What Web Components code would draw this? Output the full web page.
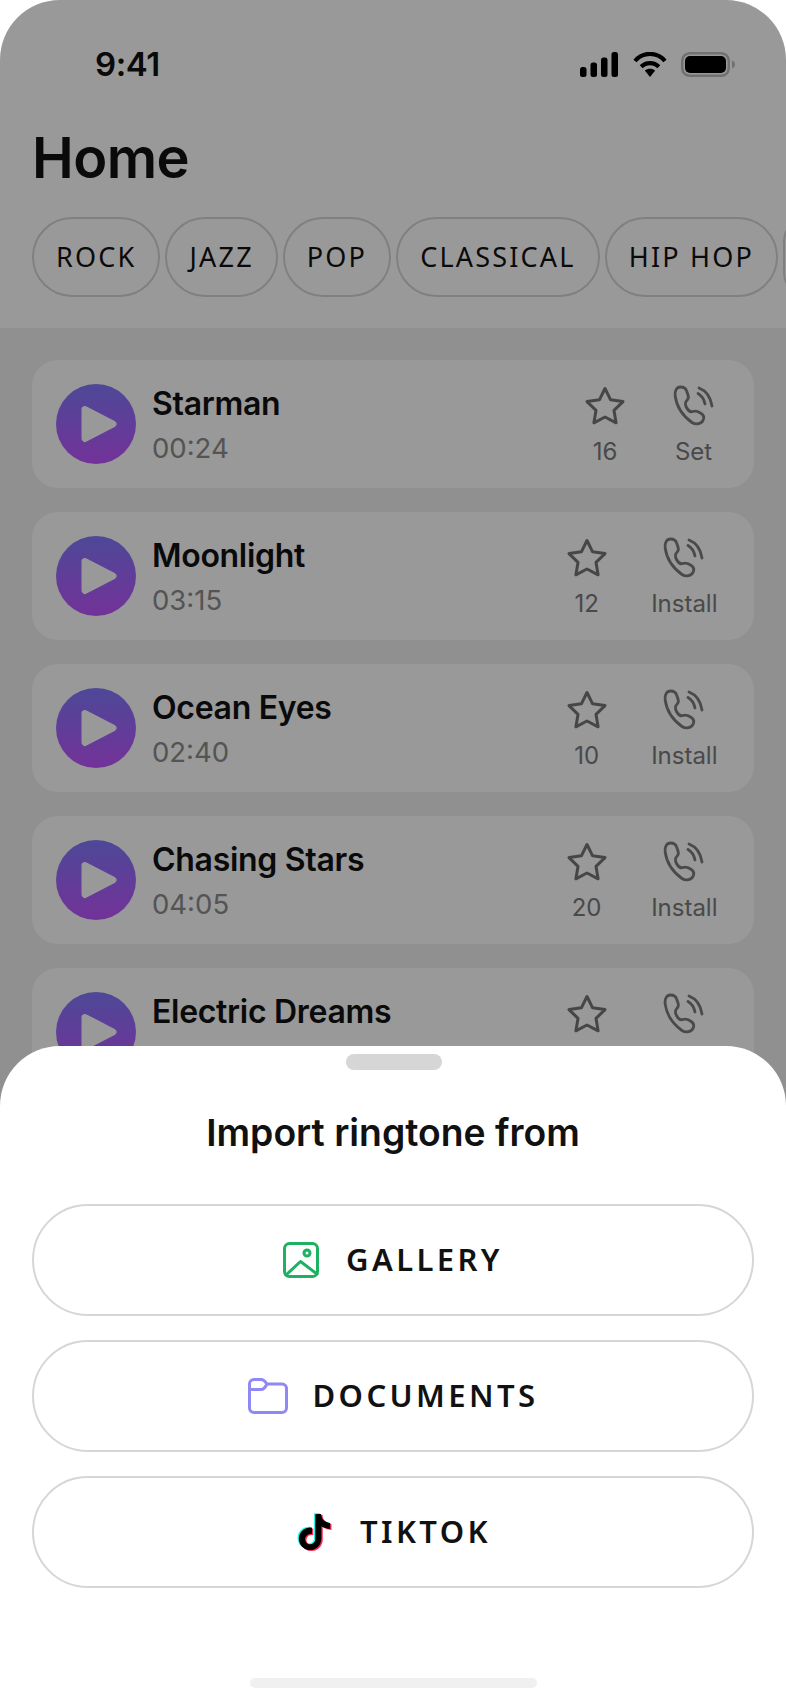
<!DOCTYPE html>
<html lang="en">
<head>
<meta charset="utf-8">
<title>Home</title>
<style>
  html, body { margin: 0; padding: 0; background: #fff; }
  body { font-family: Inter, "Liberation Sans", sans-serif; color: #111; }
</style>
</head>
<body>
<app-screen>
  <status-bar slot="header" time="9:41"></status-bar>
  <home-header slot="header" heading="Home">
    <genre-chip>ROCK</genre-chip>
    <genre-chip>JAZZ</genre-chip>
    <genre-chip>POP</genre-chip>
    <genre-chip>CLASSICAL</genre-chip>
    <genre-chip>HIP HOP</genre-chip>
    <genre-chip></genre-chip>
  </home-header>

  <ringtone-card name="Starman" time="00:24" stars="16" action="Set"></ringtone-card>
  <ringtone-card name="Moonlight" time="03:15" stars="12" action="Install"></ringtone-card>
  <ringtone-card name="Ocean Eyes" time="02:40" stars="10" action="Install"></ringtone-card>
  <ringtone-card name="Chasing Stars" time="04:05" stars="20" action="Install"></ringtone-card>
  <ringtone-card name="Electric Dreams" time="03:50" stars="8" action="Install"></ringtone-card>

  <import-sheet slot="sheet" heading="Import ringtone from">
    <import-option icon="gallery">GALLERY</import-option>
    <import-option icon="documents">DOCUMENTS</import-option>
    <import-option icon="tiktok">TIKTOK</import-option>
  </import-sheet>
</app-screen>

<script>
// Screen frame: header, scrolling list, dim layer and the bottom sheet on top
class AppScreen extends HTMLElement {
  connectedCallback() {
    this.attachShadow({ mode: 'open' }).innerHTML = `
      <style>
        :host {
          display: block;
          position: relative;
          width: 786px;
          height: 1704px;
          overflow: hidden;
          border-radius: 60px 60px 0 0;
          background: #f0f0f0;
        }
        .list {
          display: flex;
          flex-direction: column;
          gap: 24px;
          padding: 32px;
        }
        .scrim {
          position: absolute;
          inset: 0;
          background: rgba(0, 0, 0, 0.4);
        }
      </style>
      <slot name="header"></slot>
      <div class="list"><slot></slot></div>
      <div class="scrim"></div>
      <slot name="sheet"></slot>
    `;
  }
}

class StatusBar extends HTMLElement {
  connectedCallback() {
    const time = this.getAttribute('time') || '';
    this.attachShadow({ mode: 'open' }).innerHTML = `
      <style>
        :host {
          display: flex;
          align-items: center;
          justify-content: space-between;
          height: 48px;
          padding: 40px 50px 36px 95px;
          background: #fff;
        }
        .time { font: 600 33px/48px Inter, sans-serif; color: #111; letter-spacing: -0.4px; }
        .icons { display: flex; align-items: center; }
        svg { display: block; }
      </style>
      <span class="time">${time}</span>
      <div class="icons">
        <svg width="38" height="25" viewBox="0 0 38 25" fill="#000">
          <rect x="0" y="15" width="6.5" height="10" rx="2.5"/>
          <rect x="10.5" y="10.5" width="6.5" height="14.5" rx="2.5"/>
          <rect x="21" y="5.5" width="6.5" height="19.5" rx="2.5"/>
          <rect x="31.5" y="0" width="6.5" height="25" rx="2.5"/>
        </svg>
        <svg style="margin-left:15px" width="34" height="25" viewBox="0 0 34 25">
          <path d="M2 9C10 -0.5 24 -0.5 32 9" fill="none" stroke="#000" stroke-width="4.2"/>
          <path d="M8.2 14.8C13 9.8 21 9.8 25.8 14.8" fill="none" stroke="#000" stroke-width="4.2"/>
          <path d="M11.8 18.6C14.8 16.2 19.2 16.2 22.2 18.6L17 25Z" fill="#000"/>
        </svg>
        <svg style="margin-left:14px" width="55" height="25" viewBox="0 0 55 25">
          <rect x="1.25" y="1.25" width="46.5" height="22.5" rx="7.5" fill="none" stroke="#bcbcbc" stroke-width="2.5"/>
          <rect x="4" y="4" width="41" height="17" rx="5" fill="#000"/>
          <path d="M51 8.5C53 9.2 54 10.6 54 12.5C54 14.4 53 15.8 51 16.5Z" fill="#bcbcbc"/>
        </svg>
      </div>
    `;
  }
}

class HomeHeader extends HTMLElement {
  connectedCallback() {
    const heading = this.getAttribute('heading') || '';
    this.attachShadow({ mode: 'open' }).innerHTML = `
      <style>
        :host {
          display: block;
          box-sizing: border-box;
          background: #fff;
          padding-left: 32px;
          height: 204px;
          overflow: hidden;
        }
        h1 {
          margin: 1px 0 26px 0;
          font: 600 56px/66px Inter, sans-serif;
          color: #111;
          letter-spacing: -0.6px;
        }
        .chips { display: flex; gap: 5px; width: 900px; }
      </style>
      <h1>${heading}</h1>
      <div class="chips"><slot></slot></div>
    `;
  }
}

class GenreChip extends HTMLElement {
  connectedCallback() {
    this.attachShadow({ mode: 'open' }).innerHTML = `
      <style>
        :host {
          display: block;
          flex: none;
          box-sizing: border-box;
          height: 80px;
          padding: 0 22px;
          border: 2px solid #d6d6d6;
          border-radius: 40px;
          font: 400 27px/76px "Noto Sans", sans-serif;
          letter-spacing: 2.2px;
          color: #111;
          white-space: nowrap;
        }
      </style>
      <slot></slot>
    `;
  }
}

class RingtoneCard extends HTMLElement {
  connectedCallback() {
    const name = this.getAttribute('name') || '';
    const time = this.getAttribute('time') || '';
    const stars = this.getAttribute('stars') || '';
    const action = this.getAttribute('action') || '';
    this.attachShadow({ mode: 'open' }).innerHTML = `
      <style>
        :host {
          display: flex;
          flex: none;
          align-items: center;
          height: 128px;
          padding: 0 36.5px 0 24px;
          background: #fff;
          border-radius: 26px;
        }
        .play {
          flex: none;
          display: flex;
          align-items: center;
          justify-content: center;
          width: 80px;
          height: 80px;
          border-radius: 50%;
          background: linear-gradient(180deg, #8179fc 0%, #c054ff 100%);
        }
        .info { flex: 1; min-width: 0; margin-left: 16px; padding-top: 3px; }
        .name { font: 600 32px/44px Inter, sans-serif; color: #111; letter-spacing: -0.3px; }
        .time { font: 400 27.5px/44px Inter, sans-serif; color: #8c8c8c; }
        .actions { display: flex; gap: 40.5px; }
        .action {
          display: flex;
          flex-direction: column;
          align-items: center;
          gap: 7px;
          font: 400 24px/30px Inter, sans-serif;
          color: #7a7a7a;
        }
        svg { display: block; }
      </style>
      <div class="play">
        <svg width="36" height="38" viewBox="0 0 36 38" style="margin-left:6px">
          <path d="M4 4.5L32 19L4 33.5Z" fill="#fff" stroke="#fff" stroke-width="7" stroke-linejoin="round"/>
        </svg>
      </div>
      <div class="info">
        <div class="name">${name}</div>
        <div class="time">${time}</div>
      </div>
      <div class="actions">
        <div class="action">
          <svg width="48" height="48" viewBox="0 0 48 48" fill="none" stroke="#767676" stroke-width="3" stroke-linejoin="round">
            <path d="M24 6.5L29.6 17.8L42 19.6L33 28.4L35.1 40.8L24 35L12.9 40.8L15 28.4L6 19.6L18.4 17.8Z"/>
          </svg>
          <span>${stars}</span>
        </div>
        <div class="action">
          <svg width="48" height="48" viewBox="0 0 48 48" fill="none" stroke="#7c7c7c" stroke-width="2.8" stroke-linecap="round" stroke-linejoin="round">
            <path d="M10.5 5C6.5 5 4.5 9 5.2 14C6.5 24 13 34 22 40.5C26 43 31.5 42 33.2 38C34.5 35 33 32.5 30.5 31L27.5 29.5C25.5 28.8 24.5 29 23 29.5C20 30.5 18 28.5 16.5 25.5C15 22.5 15.2 20 16.8 18.5C18.5 17 18.8 15.5 18 13L16.8 9.5C16 6.5 13.5 5 10.5 5Z"/>
            <path d="M28 11.5C31.5 13.5 34 17 35 22"/>
            <path d="M29 6C35.5 8.5 40.5 14.5 42 24"/>
          </svg>
          <span>${action}</span>
        </div>
      </div>
    `;
  }
}

class ImportSheet extends HTMLElement {
  connectedCallback() {
    const heading = this.getAttribute('heading') || '';
    this.attachShadow({ mode: 'open' }).innerHTML = `
      <style>
        :host {
          position: absolute;
          left: 0;
          right: 0;
          bottom: 0;
          height: 658px;
          display: flex;
          flex-direction: column;
          align-items: center;
          box-sizing: border-box;
          padding: 8px 32px 16px;
          background: #fff;
          border-radius: 60px 60px 0 0;
        }
        .handle { flex: none; width: 96px; height: 16px; margin-left: 2px; border-radius: 8px; background: #d6d6d6; }
        h2 {
          margin: 39px 0 47px;
          font: 600 37.3px/48px Inter, sans-serif;
          color: #111;
        }
        .options { align-self: stretch; display: flex; flex-direction: column; gap: 24px; }
        .home-bar { margin-top: auto; width: 287px; height: 10px; border-radius: 5px; background: #f0f0f0; }
      </style>
      <div class="handle"></div>
      <h2>${heading}</h2>
      <div class="options"><slot></slot></div>
      <div class="home-bar"></div>
    `;
  }
}

const TIKTOK_NOTE = 'M12.525.02c1.31-.02 2.61-.01 3.91-.02.08 1.53.63 3.09 1.75 4.17 1.12 1.11 2.7 1.62 4.24 1.79v4.03c-1.44-.05-2.89-.35-4.2-.97-.57-.26-1.1-.59-1.62-.93-.01 2.92.01 5.84-.02 8.75-.08 1.4-.54 2.79-1.35 3.94-1.31 1.92-3.58 3.17-5.91 3.21-1.43.08-2.86-.31-4.08-1.03-2.02-1.19-3.44-3.37-3.65-5.71-.02-.5-.03-1-.01-1.49.18-1.9 1.12-3.72 2.58-4.96 1.66-1.44 3.98-2.13 6.15-1.72.02 1.48-.04 2.96-.04 4.44-.99-.32-2.15-.23-3.02.37-.63.41-1.11 1.04-1.36 1.75-.21.51-.15 1.07-.14 1.61.24 1.64 1.82 3.02 3.5 2.87 1.12-.01 2.19-.66 2.77-1.61.19-.33.4-.67.41-1.06.1-1.79.06-3.57.07-5.36.01-4.03-.01-8.05.02-12.07z';

const OPTION_ICONS = {
  gallery: `<svg width="36" height="36" viewBox="0 0 36 36" fill="none" stroke="#1db162" stroke-width="3" stroke-linejoin="round" stroke-linecap="round">
      <rect x="1.5" y="1.5" width="33" height="33" rx="5"/>
      <circle cx="24" cy="11" r="3"/>
      <path d="M3 33L17.5 19.5L34 32"/>
    </svg>`,
  documents: `<svg style="margin-right:-2px" width="40" height="36" viewBox="0 0 40 36" fill="none" stroke="#8f88f5" stroke-width="3" stroke-linejoin="round">
      <path d="M1.5 6C1.5 3.5 3.5 1.5 6 1.5H13C15 1.5 17 3 19 6H34C36.5 6 38.5 8 38.5 10.5V30C38.5 32.5 36.5 34.5 34 34.5H6C3.5 34.5 1.5 32.5 1.5 30Z"/>
      <path d="M1.5 11.5H13C15.5 11.5 17.5 9 19 6"/>
    </svg>`,
  tiktok: `<svg width="38" height="40" viewBox="-1 -1 25.3 26.7">
      <path transform="translate(-0.9 -0.2)" fill="#25f4ee" d="${TIKTOK_NOTE}"/>
      <path transform="translate(0.9 1)" fill="#fe2c55" d="${TIKTOK_NOTE}"/>
      <path transform="translate(0 0.4)" fill="#000" d="${TIKTOK_NOTE}"/>
    </svg>`
};

class ImportOption extends HTMLElement {
  connectedCallback() {
    const icon = OPTION_ICONS[this.getAttribute('icon')] || '';
    this.attachShadow({ mode: 'open' }).innerHTML = `
      <style>
        :host {
          display: flex;
          align-items: center;
          justify-content: center;
          gap: 27px;
          box-sizing: border-box;
          height: 112px;
          border: 2px solid #d6d6d6;
          border-radius: 56px;
          font: 600 31px/40px "Noto Sans", sans-serif;
          letter-spacing: 3.4px;
          color: #111;
        }
        span { padding-bottom: 2px; }
        svg { display: block; flex: none; }
      </style>
      ${icon}
      <span><slot></slot></span>
    `;
  }
}

customElements.define('app-screen', AppScreen);
customElements.define('status-bar', StatusBar);
customElements.define('home-header', HomeHeader);
customElements.define('genre-chip', GenreChip);
customElements.define('ringtone-card', RingtoneCard);
customElements.define('import-sheet', ImportSheet);
customElements.define('import-option', ImportOption);
</script>
</body>
</html>
